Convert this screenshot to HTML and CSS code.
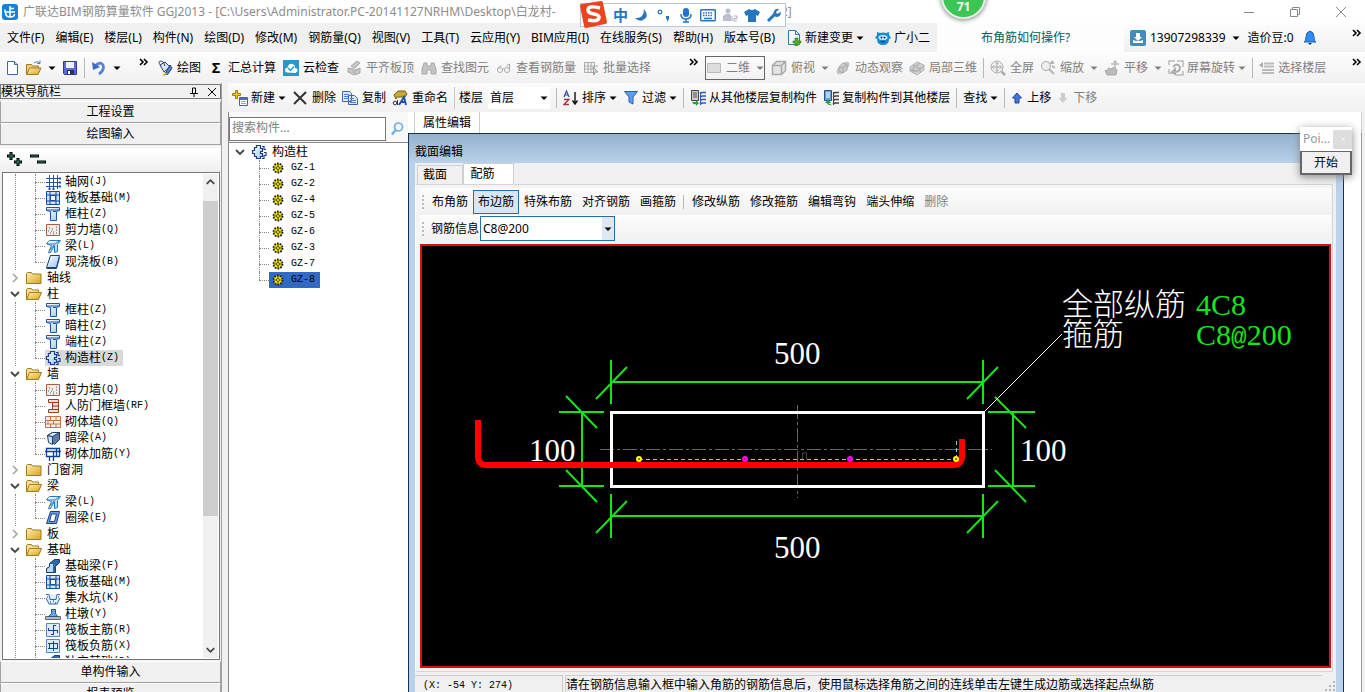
FILE: index.html
```html
<!DOCTYPE html>
<html lang="zh-CN">
<head>
<meta charset="utf-8">
<title>广联达BIM钢筋算量软件 GGJ2013</title>
<link rel="stylesheet" href="styles.css">
</head>
<body>
<svg class="sprite" aria-hidden="true">
  <defs>
    <linearGradient id="gold" x1="0" y1="0" x2="1" y2="1"><stop offset="0" stop-color="#fff3b0"/><stop offset="1" stop-color="#d9a21b"/></linearGradient>
    <linearGradient id="sky" x1="0" y1="0" x2="1" y2="1"><stop offset="0" stop-color="#ffffff"/><stop offset="1" stop-color="#9cc8f5"/></linearGradient>
  </defs>
  <symbol id="caret" viewBox="0 0 8 8"><path d="M0.5 2.5h7L4 6z" fill="currentColor"/></symbol>
  <symbol id="more" viewBox="0 0 10 8"><path d="M1 1l3 3-3 3M5 1l3 3-3 3" fill="none" stroke="#000" stroke-width="1.6"/></symbol>
  <symbol id="down" viewBox="0 0 16 16"><path d="M4 6l4 4 4-4" fill="none" stroke="#444" stroke-width="1.8"/></symbol>
  <symbol id="up" viewBox="0 0 16 16"><path d="M4 10l4-4 4 4" fill="none" stroke="#444" stroke-width="1.8"/></symbol>
  <symbol id="right" viewBox="0 0 16 16"><path d="M6 4l4 4-4 4" fill="none" stroke="#a0a0a0" stroke-width="1.5"/></symbol>
  <symbol id="folder" viewBox="0 0 16 16"><path d="M.5 3.5l1-1h4l1 1.500h8.500v9.500H.5z" fill="url(#gold)" stroke="#a5781a"/></symbol>
  <symbol id="folder-open" viewBox="0 0 16 16"><path d="M.5 13.500v-10l1-1h4l1 1.500h6v3" fill="#fbe08a" stroke="#a5781a"/><path d="M.5 13.500l3-7h12l-3 7z" fill="url(#gold)" stroke="#a5781a"/></symbol>
  <symbol id="axis" viewBox="0 0 16 16"><path d="M4.500 1v14M8.500 1v14M12.500 1v14M1 4.500h14M1 8.500h14M1 12.500h14" stroke="#1d55b5"/><path d="M14 3.500h2v2h-2zM14 7.500h2v2h-2zM14 11.500h2v2h-2zM3.500 14h2v2h-2zM7.500 14h2v2h-2z" fill="#1d55b5"/></symbol>
  <symbol id="raft" viewBox="0 0 16 16"><path d="M1.500 1.500h13v13h-13z" fill="#cfe5fb" stroke="#124a9d"/><path d="M5 1.500v13M11 1.500v13M1.500 5h13M1.500 11h13" stroke="#124a9d"/><path d="M5.500 5.500h5v5h-5z" fill="#fff" stroke="#124a9d"/></symbol>
  <symbol id="col" viewBox="0 0 16 16"><path d="M1.500 1.500h13v3l-3 1v9h-6v-9l-4-1z" fill="url(#sky)" stroke="#1b57a7"/><path d="M1.500 4h13M8 5.500h3" stroke="#1b57a7"/></symbol>
  <symbol id="wall" viewBox="0 0 16 16"><path d="M1.500 2.500h13v11h-13z" fill="#f3ece7" stroke="#a55b3d"/><path d="M3 9h1M5 11h1M8 10h1M4 6h1M7 7h1M11 8h1M11 11h1M8 12h1M6 9h1M11 5h1" stroke="#555"/></symbol>
  <symbol id="beam" viewBox="0 0 16 16"><path d="M1.500 5.500l3-3h11l-3 4v7l-3 1v-7l-4 7h-2l3-7z" fill="url(#sky)" stroke="#2878c8"/><path d="M2 6h8l4-3M9 7l-4 5" stroke="#2878c8" fill="none"/></symbol>
  <symbol id="slab" viewBox="0 0 16 16"><path d="M5.500 1.500h9l-3 12h-10z" fill="url(#sky)" stroke="#183f8c"/><path d="M1.500 14.500h10l3-11" fill="none" stroke="#183f8c"/></symbol>
  <symbol id="ring" viewBox="0 0 16 16"><path d="M5.500 1.500h9l-3 12h-10z" fill="#6fa0df" stroke="#183f8c"/><path d="M6.500 4h5l-2 7.500H4.500z" fill="#fff" stroke="#183f8c"/></symbol>
  <symbol id="tie" viewBox="0 0 16 16"><path d="M5.500 1.500h4v3h2v3h-2v2h2v3h-2v2h-4v-2h-2v-3h-2v-3h2v-3h2z" fill="url(#sky)" stroke="#183f8c" stroke-width="1.200"/><path d="M11 2.500h2v3h2M13 8.500h2v3h-2v3h-2" fill="none" stroke="#183f8c" stroke-width="1.200"/></symbol>
  <symbol id="door-wall" viewBox="0 0 16 16"><path d="M3.500 1.500h10v13h-10v-3h4v-7h-4z" fill="#f9dfc9" stroke="#923f1d"/><path d="M7.500 4.500h6M7.500 8h6M7.500 11.500h6" stroke="#923f1d"/></symbol>
  <symbol id="brick" viewBox="0 0 16 16"><path d="M.5 2.500h15v11H.5zM.5 6.500h15M.5 10h15M5.500 2.500v4M11 2.500v4M3 6.500v3.500M8.500 6.500v3.500M5.500 10v3.500M11 10v3.500" fill="#fff1e8" stroke="#c4704a"/></symbol>
  <symbol id="hidden-beam" viewBox="0 0 16 16"><path d="M2.500 5.500l5-3h7v7l-5 5z" fill="#5b7ba5" stroke="#223d66"/><path d="M2.500 5.500l5 1v8l-4-2z" fill="#c8e2fb" stroke="#223d66"/><path d="M2.500 5.500l5-3h7l-7 4z" fill="#deeefd" stroke="#223d66"/></symbol>
  <symbol id="rebar" viewBox="0 0 16 16"><path d="M1.500 2.500h10v8h-10zM0 5.500h16M4.500 10v5M8.500 5v10M11.500 2.500h3v8h-3" fill="none" stroke="#123f96" stroke-width="1.300"/></symbol>
  <symbol id="footing" viewBox="0 0 16 16"><path d="M1.500 14.500v-4l3-2v-3l5-4h5v3l-4 4v6z" fill="#2d68ac" stroke="#173d70"/><path d="M2 14v-3l3-2v-3h3v8z" fill="#b9dafa"/></symbol>
  <symbol id="pit" viewBox="0 0 16 16"><path d="M1 4.500h3l1 5h6l1-5h3M1 8l3 6h8l3-6" fill="#dceeff" stroke="#2b65ad"/><path d="M2 7h1M13 7h1M5 12h1M8 11h1M10 13h1" stroke="#123"/></symbol>
  <symbol id="pier" viewBox="0 0 16 16"><path d="M.5 10.500h15v3H.5z" fill="#bbb" stroke="#666"/><path d="M3.500 10.500l3-3v-4h4v4l2 3z" fill="#69a5e2" stroke="#23548e"/></symbol>
  <symbol id="main-bar" viewBox="0 0 16 16"><path d="M1.500 1.500h13v13h-13z" fill="#dcebfc" stroke="#5b83bd"/><path d="M3 8.500h10M8.500 3v10M3.500 6v3M12.500 8v3M8 3.500h3M6 12.500h3" stroke="#15448d"/></symbol>
  <symbol id="neg-bar" viewBox="0 0 16 16"><path d="M1.500 1.500h13v13h-13z" fill="#dcebfc" stroke="#5b83bd"/><path d="M3 5.500h10M3 10.500h10M8.500 3v10M4.500 5v6M12.500 5v6" stroke="#15448d"/></symbol>
  <symbol id="gear" viewBox="0 0 12 12"><circle cx="6" cy="6" r="4.500" fill="#f4e900" stroke="#222" stroke-width="1.800" stroke-dasharray="1.800 1"/><path d="M6 2v8M2 6h8" stroke="#554f00"/><circle cx="6" cy="6" r="1.500" fill="#fff700" stroke="#554f00"/></symbol>
  <symbol id="new" viewBox="0 0 16 16"><path d="M3.500 1.500h7l3 3v10h-10z" fill="#fff" stroke="#44699c"/><path d="M10.500 1.500v3h3" fill="#bfd4ee" stroke="#44699c"/></symbol>
  <symbol id="open" viewBox="0 0 16 16"><path d="M.5 14.500v-10h5l1 1.500h6v2.500" fill="#f4cf69" stroke="#a27622"/><path d="M.5 14.500l3-6.500h11.500l-3 6.500z" fill="url(#gold)" stroke="#a27622"/><path d="M8 3q3-3 6 0M14 .5v3h-3" fill="none" stroke="#567eb5"/></symbol>
  <symbol id="save" viewBox="0 0 16 16"><path d="M1.500 1.500h13v13h-12l-1-1z" fill="#5c6bd0" stroke="#30398f"/><path d="M4 2h8v6H4z" fill="#edf1fc"/><path d="M5 10h7v4H5z" fill="#26305b"/><path d="M6 11h2v3H6z" fill="#fff"/></symbol>
  <symbol id="undo" viewBox="0 0 16 16"><path d="M4 6q5-5 8-1 2 5-4 9" fill="none" stroke="#5583dc" stroke-width="2.800"/><path d="M1 2l1 8 7-3z" fill="#3969cb"/></symbol>
  <symbol id="paint" viewBox="0 0 16 16"><path d="M3 5l5-3 5 5-6 5z" fill="#dbe5f2" stroke="#32476d"/><path d="M4 6q-4-5 0-5 3 0 4 5" fill="none" stroke="#32476d"/><path d="M13 5l2 3-4 6-4 1 2-3z" fill="#4a84cf" stroke="#21406f"/><path d="M7 12l3 2-5 2z" fill="#f0ce38"/></symbol>
  <symbol id="cloud" viewBox="0 0 16 16"><path d="M0 0h16v16H0z" fill="#2798c9"/><path d="M4 12.500q-3-1-1.500-4 1-1 2-.5 1-5 5-4 3 1 2.500 4 3 0 2.500 3l-2 2z" fill="#fff"/><path d="M5 8l2.500 2.500L11 6.500" fill="none" stroke="#2798c9" stroke-width="1.500"/></symbol>
  <symbol id="align" viewBox="0 0 16 16"><path d="M5 6l6-5 3 2-5 5zM2 8l6 1v6l-6-3zM9 10l5-2v5l-5 2z" fill="#c6c6c6" stroke="#aaa"/></symbol>
  <symbol id="bino" viewBox="0 0 16 16"><path d="M3 3h3v3h4V3h3l2 6v5h-5v-4H6v4H1V9z" fill="#c3c3c3" stroke="#aaa"/></symbol>
  <symbol id="glasses" viewBox="0 0 16 16"><circle cx="4" cy="10" r="2.500" fill="none" stroke="#aaa"/><circle cx="11" cy="10" r="2.500" fill="none" stroke="#aaa"/><path d="M1.500 9l4-4M6.500 9h2M13.500 10V4l-3 2" fill="none" stroke="#aaa"/></symbol>
  <symbol id="batch" viewBox="0 0 16 16"><path d="M1.500 2.500h10v10h-10zM5 2v11M8 2v11M1 6h14M1 9h11" fill="none" stroke="#aaa"/><path d="M10 7l5 5-3 0-1 3z" fill="#ddd" stroke="#999"/></symbol>
  <symbol id="rect" viewBox="0 0 16 16"><path d="M1.500 3.500h13v9h-13z" fill="#ddd" stroke="#bbb"/></symbol>
  <symbol id="cube" viewBox="0 0 16 16"><path d="M1.500 5.500l4-4h9v9l-4 4h-9zM1.500 5.500h9v9M10.500 5.500l4-4" fill="#e4e4e4" stroke="#aaa" stroke-width="1.500"/></symbol>
  <symbol id="orbit" viewBox="0 0 16 16"><ellipse cx="8" cy="8" rx="8" ry="4" transform="rotate(-45 8 8)" fill="#c4c4c4"/><path d="M4 7l4-4 4 2v5l-4 3-4-2zM4 7l4 1 4-3M8 8v5" fill="#ccc" stroke="#aaa"/></symbol>
  <symbol id="part3d" viewBox="0 0 16 16"><path d="M1 7l7-5 7 3v5l-7 5-7-4z" fill="#d0d0d0" stroke="#b5b5b5"/><path d="M4 5l7 4v4M11 3L4 8v5M1 10l7 1 7-5" fill="none" stroke="#b0b0b0" stroke-width="1.300"/></symbol>
  <symbol id="fit" viewBox="0 0 16 16"><circle cx="7" cy="7" r="6" fill="#eee" stroke="#aaa"/><path d="M7 2.500v9M2.500 7h9M5.500 4L7 2.500 8.500 4M5.500 10L7 11.500 8.500 10M4 5.500L2.500 7 4 8.500M10 5.500L11.500 7 10 8.500" fill="none" stroke="#aaa"/><path d="M11.500 11.500L15 15" stroke="#aaa" stroke-width="2.500"/></symbol>
  <symbol id="zoomer" viewBox="0 0 16 16"><circle cx="6" cy="6" r="4.500" fill="#eee" stroke="#aaa"/><path d="M9 9l5 5M14 3h-3l2-2M12 6l3 2" stroke="#b5b5b5" stroke-width="2" fill="none"/></symbol>
  <symbol id="hand" viewBox="0 0 16 16"><path d="M3 15l-2-5 3 1V8l3 1 3-2 3 3-1 5z" fill="#bbb" stroke="#aaa"/><path d="M11 1v7M7 4h8M9.500 2.500L11 1l1.500 1.500" stroke="#bbb" fill="none" stroke-width="1.500"/></symbol>
  <symbol id="rotate" viewBox="0 0 16 16"><path d="M1 5V1h6M9 1h6v6M15 11v4H8M1 9v4h4" fill="none" stroke="#bbb" stroke-width="1.500"/><path d="M5 7q4-5 7 0 0 5-5 5M7 9v5L4 12z" fill="none" stroke="#aaa" stroke-width="1.800"/></symbol>
  <symbol id="floors" viewBox="0 0 16 16"><path d="M5 3.500h10M5 6.500h10M3 10h12M3 13h12" stroke="#bbb" stroke-width="2"/><path d="M0 5l4-3v6z" fill="#aaa"/></symbol>
  <symbol id="create" viewBox="0 0 16 16"><path d="M3.500.5h2v3h3v2h-3v3h-2v-3h-3v-2h3z" fill="#f3c527" stroke="#a27a12"/><path d="M7.500 7.500h8v8h-8z" fill="#fff" stroke="#3f66a6"/><path d="M8 8h7v2H8z" fill="#3f75c6"/><path d="M9 11.500h5M9 13.500h5" stroke="#8da8cf"/></symbol>
  <symbol id="delete" viewBox="0 0 16 16"><path d="M2 2l12 12M14 2L2 14" stroke="#333" stroke-width="2"/></symbol>
  <symbol id="copy" viewBox="0 0 16 16"><path d="M.5 1.500h7l2 2v8h-9zM6.500 5.500h6l3 3v6h-9z" fill="#dce9fb" stroke="#3965a9"/><path d="M2 4.500h5M2 6.500h4M2 8.500h4M8 8.500h4M8 10.500h6M8 12.500h6" stroke="#5383c8"/></symbol>
  <symbol id="rename" viewBox="0 0 16 16"><path d="M2 5l4-4h7l2 3-2 3H5l-1 2z" fill="#cda82e" stroke="#765d18"/><path d="M7 15l5-8 2 8M9 12h5" stroke="#2154b2" stroke-width="2" fill="none"/><circle cx="3" cy="13" r="1.800" fill="none" stroke="#333"/><path d="M5.500 10v5" stroke="#333"/></symbol>
  <symbol id="sort" viewBox="0 0 16 16"><path d="M1 7l2.500-6L6 7M2 5h3" fill="none" stroke="#3449a0" stroke-width="1.200"/><path d="M1 9.500h5l-5 5h5" fill="none" stroke="#a93043" stroke-width="1.300"/><path d="M12 2v11M9.500 10.500L12 14l2.500-3.500" fill="none" stroke="#111" stroke-width="1.400"/></symbol>
  <symbol id="filter" viewBox="0 0 16 16"><path d="M1.500 1.500h13L10 7v7l-4-2V7z" fill="#5e9cf0" stroke="#2b5eb3"/></symbol>
  <symbol id="copy-floor" viewBox="0 0 16 16"><path d="M1.500.5h7v10h-7z" fill="#ccc" stroke="#444"/><path d="M3 3h4M3 5h4M3 7h4" stroke="#555"/><path d="M10 3.500l2-1h4M10 7l2-1h4M10 10.500l2-1h4M10 14l2-1h4" fill="none" stroke="#285db2" stroke-width="1.700"/><path d="M10.500 2v13" stroke="#285db2"/><path d="M2 12q1 3 4 2v2l3-3-3-3v2z" fill="#24a148"/></symbol>
  <symbol id="copy-to" viewBox="0 0 16 16"><path d="M1.500.5h7v10h-7z" fill="#69a4d8" stroke="#24528b"/><path d="M3 3h4M3 5h4M3 7h4" stroke="#fff"/><path d="M10 3.500l2-1h4M10 7l2-1h4M10 10.500l2-1h4M10 14l2-1h4" fill="none" stroke="#444" stroke-width="1.700"/><path d="M10.500 2v13" stroke="#444"/><path d="M9 15q-4 1-5-2H2l3-4 3 4H6q0 1 3 2z" fill="#24a148"/></symbol>
  <symbol id="arrow-up" viewBox="0 0 12 12"><path d="M6 1l4.500 5H8v5H4V6H1.500z" fill="#3c79e5" stroke="#1d4794"/></symbol>
  <symbol id="arrow-down" viewBox="0 0 12 12"><path d="M6 11L1.500 6H4V1h4v5h2.500z" fill="#ccc"/></symbol>
  <symbol id="change" viewBox="0 0 16 16"><path d="M2.500.5h7l4 4v10h-11z" fill="#eef6ff" stroke="#3576a8"/><path d="M9.500.5v4h4" fill="none" stroke="#3576a8"/><path d="M9 8h3v3h3v2h-3v3H9v-3H7v-2h2z" fill="#50ae25" stroke="#287c10" stroke-width=".6"/></symbol>
  <symbol id="mascot" viewBox="0 0 16 16"><path d="M2 2l3 1q3-1 6 0l3-1v3l2 3-2 1q0 6-6 6t-6-6L0 8l2-3z" fill="#168bd0"/><ellipse cx="8" cy="7.500" rx="4.500" ry="2.500" fill="#cceeff"/><circle cx="6.500" cy="7.500" r="1" fill="#136"/><circle cx="9.500" cy="7.500" r="1" fill="#136"/><path d="M6 11.500q2 1 4 0" stroke="#126" fill="none"/></symbol>
  <symbol id="user" viewBox="0 0 16 16"><rect width="16" height="16" rx="2" fill="#3e8dbd"/><path d="M6 3h4v4h2l-4 4-4-4h2zM3 10v3h10v-3l-3 1H6z" fill="#fff"/></symbol>
  <symbol id="bell" viewBox="0 0 14 16"><path d="M7 1q4 1 4 6 0 4 2 5H1q2-1 2-5 0-5 4-6z" fill="#2d8cf5" stroke="#1e5eb0"/><path d="M5 13h4l-2 2z" fill="#16365f"/></symbol>
  <symbol id="search" viewBox="0 0 16 16"><circle cx="9.500" cy="6" r="4" fill="#edf7ff" stroke="#71b2df" stroke-width="1.700"/><path d="M6.500 9L3 13.500" stroke="#71b2df" stroke-width="2.500"/></symbol>
</svg>

<header class="titlebar">
  <svg class="logo" viewBox="0 0 16 16"><rect width="16" height="16" rx="3" fill="#1581dc"/><path d="M8 2v11M3 5.500v2.500h10M3.500 8q0 5 4.500 5t4.500-3M8 4.500h4" fill="none" stroke="#fff" stroke-width="1.500"/></svg>
  <h1>广联达BIM钢筋算量软件 GGJ2013 - [C:\Users\Administrator.PC-20141127NRHM\Desktop\白龙村-</h1>
  <span class="title-tail">2]</span>
  <div class="window-buttons">
    <button aria-label="最小化"><svg viewBox="0 0 12 12"><path d="M1 6.500h10" stroke="#888"/></svg></button>
    <button aria-label="还原"><svg viewBox="0 0 12 12"><path d="M1.500 3.500h7v7h-7zM3.500 3.500v-2h7v7h-2" fill="none" stroke="#888"/></svg></button>
    <button aria-label="关闭"><svg viewBox="0 0 12 12"><path d="M1 1l10 10M11 1L1 11" stroke="#888"/></svg></button>
  </div>
  <div class="ime">
    <svg class="ime-logo" viewBox="0 0 28 28"><path d="M1 5Q1 3 3 3L22 0q2 0 2 2l4 19q0 2-2 2L7 27q-2 0-2-2z" fill="#e9441d"/><path d="M21 7q-12-3-12 2 0 3 6 4t5 4q-1 4-11 2" fill="none" stroke="#fff" stroke-width="3.500"/></svg>
    <span>中</span>
    <svg viewBox="0 0 16 16"><path d="M10 2q6 8-1 11-4 2-8-2 9 1 9-9z" fill="#2575bf"/></svg>
    <svg viewBox="0 0 16 16"><circle cx="4" cy="5" r="1.800" fill="none" stroke="#2575bf" stroke-width="1.300"/><path d="M10 9h3v3l-2 3v-3h-1z" fill="#2575bf"/></svg>
    <svg viewBox="0 0 16 16"><rect x="5" y="1" width="6" height="9" rx="3" fill="#2575bf"/><path d="M3 7q0 5 5 5t5-5M8 12v3M5 15h6" fill="none" stroke="#2575bf" stroke-width="1.500"/></svg>
    <svg viewBox="0 0 16 16"><rect x=".7" y="2.700" width="14.600" height="11" rx="1" fill="none" stroke="#2575bf" stroke-width="1.500"/><path d="M3 6h10M3 8.500h10" stroke="#2575bf" stroke-width="1.500" stroke-dasharray="1.500 1"/><path d="M4 11.500h8" stroke="#2575bf" stroke-width="1.500"/></svg>
    <svg viewBox="0 0 16 16"><circle cx="6" cy="4" r="2.500" fill="#b9bfd1"/><path d="M1 14V9q5-4 8-1v6z" fill="#b9bfd1"/><path d="M10 9v5M12 9h3v2.500h-3V14h3" fill="none" stroke="#a5adc4"/></svg>
    <svg viewBox="0 0 16 16"><path d="M5 2q3 2 6 0l5 3-2 4-2-1v7H4V8L2 9 0 5z" fill="#2575bf"/></svg>
    <svg viewBox="0 0 16 16"><path d="M2 14l7-7" stroke="#2575bf" stroke-width="3"/><path d="M13 2l-3 3 1 2 4-2q0 5-5 5-4-2-2-6 2-3 5-2z" fill="#2575bf"/></svg>
  </div>
  <div class="speed-ball">71</div>
</header>

<div class="menubar">
  <nav class="menus">
    <button>文件(F)</button><button>编辑(E)</button><button>楼层(L)</button><button>构件(N)</button><button>绘图(D)</button><button>修改(M)</button><button>钢筋量(Q)</button><button>视图(V)</button><button>工具(T)</button><button>云应用(Y)</button><button>BIM应用(I)</button><button>在线服务(S)</button><button>帮助(H)</button><button>版本号(B)</button><button class="tool tight"><svg class="ic"><use href="#change"/></svg>新建变更<svg class="caret"><use href="#caret"/></svg></button><button class="tool tight"><svg class="ic"><use href="#mascot"/></svg>广小二</button>
  </nav>
  <a class="help-link" href="#">布角筋如何操作?</a>
  <div class="account">
    <button class="tool"><svg class="ic"><use href="#user"/></svg>13907298339<svg class="caret"><use href="#caret"/></svg></button>
    <button class="tool">造价豆:0<svg class="ic bell"><use href="#bell"/></svg></button>
    <svg class="more"><use href="#more"/></svg>
  </div>
</div>

<div class="toolbar main-tools">
  <div class="file-tools">
    <button class="tool" aria-label="新建"><svg class="ic"><use href="#new"/></svg></button>
    <button class="tool" aria-label="打开"><svg class="ic"><use href="#open"/></svg><svg class="caret"><use href="#caret"/></svg></button>
    <button class="tool" aria-label="保存"><svg class="ic"><use href="#save"/></svg></button>
    <i class="sep"></i>
    <button class="tool" aria-label="撤销"><svg class="ic"><use href="#undo"/></svg><svg class="caret"><use href="#caret"/></svg></button>
    <svg class="more"><use href="#more"/></svg>
  </div>
  <div class="draw-tools">
    <button class="tool"><svg class="ic"><use href="#paint"/></svg>绘图</button>
    <button class="tool"><b class="sigma">Σ</b>汇总计算</button>
    <button class="tool"><svg class="ic"><use href="#cloud"/></svg>云检查</button>
    <button class="tool" disabled><svg class="ic"><use href="#align"/></svg>平齐板顶</button>
    <button class="tool" disabled><svg class="ic"><use href="#bino"/></svg>查找图元</button>
    <button class="tool" disabled><svg class="ic"><use href="#glasses"/></svg>查看钢筋量</button>
    <button class="tool" disabled><svg class="ic"><use href="#batch"/></svg>批量选择</button>
    <svg class="more"><use href="#more"/></svg>
  </div>
  <div class="view-tools">
    <button class="tool boxed" disabled><svg class="ic"><use href="#rect"/></svg>二维<svg class="caret"><use href="#caret"/></svg></button>
    <button class="tool" disabled><svg class="ic"><use href="#cube"/></svg>俯视<svg class="caret"><use href="#caret"/></svg></button>
    <button class="tool" disabled><svg class="ic"><use href="#orbit"/></svg>动态观察</button>
    <button class="tool" disabled><svg class="ic"><use href="#part3d"/></svg>局部三维</button>
    <i class="sep"></i>
    <button class="tool" disabled><svg class="ic"><use href="#fit"/></svg>全屏</button>
    <button class="tool" disabled><svg class="ic"><use href="#zoomer"/></svg>缩放<svg class="caret"><use href="#caret"/></svg></button>
    <button class="tool" disabled><svg class="ic"><use href="#hand"/></svg>平移<svg class="caret"><use href="#caret"/></svg></button>
    <button class="tool tight" disabled><svg class="ic"><use href="#rotate"/></svg>屏幕旋转<svg class="caret"><use href="#caret"/></svg></button>
    <i class="sep"></i>
    <button class="tool tight" disabled><svg class="ic"><use href="#floors"/></svg>选择楼层</button>
    <svg class="more"><use href="#more"/></svg>
  </div>
</div>

<main class="workspace">
  <aside class="nav-panel">
    <header class="nav-head"><h2>模块导航栏</h2>
      <button aria-label="固定"><svg viewBox="0 0 10 10"><path d="M3.500 6V1h3v5M6.500 1v5M1 6.500h8M5 6.500V10" fill="none" stroke="#000"/></svg></button>
      <button aria-label="关闭导航栏"><svg viewBox="0 0 10 10"><path d="M1 1l8 8M9 1L1 9" stroke="#000"/></svg></button>
    </header>
    <button class="section">工程设置</button>
    <button class="section">绘图输入</button>
    <div class="expanders">
      <button aria-label="全部展开"><svg viewBox="0 0 18 16"><path d="M5 1v8M1 5h8M12 7v8M8 11h8" stroke="#000" stroke-width="3"/><path d="M5 2v6M2 5h6M12 8v6M9 11h6" stroke="#2b8a72"/></svg></button>
      <button aria-label="全部折叠"><svg viewBox="0 0 18 16"><path d="M1 5h9M8 11h9" stroke="#000" stroke-width="3"/><path d="M2 5h7M9 11h7" stroke="#2b8a72"/></svg></button>
    </div>
    <div class="tree-box">
      <ul class="tree">
        <li><ul class="leaves">
          <li><svg class="ic"><use href="#axis"/></svg>轴网<span>(J)</span></li>
          <li><svg class="ic"><use href="#raft"/></svg>筏板基础<span>(M)</span></li>
          <li><svg class="ic"><use href="#col"/></svg>框柱<span>(Z)</span></li>
          <li><svg class="ic"><use href="#wall"/></svg>剪力墙<span>(Q)</span></li>
          <li><svg class="ic"><use href="#beam"/></svg>梁<span>(L)</span></li>
          <li><svg class="ic"><use href="#slab"/></svg>现浇板<span>(B)</span></li>
        </ul></li>
        <li><div class="branch"><svg class="ic"><use href="#right"/></svg><svg class="ic"><use href="#folder"/></svg>轴线</div></li>
        <li><div class="branch"><svg class="ic"><use href="#down"/></svg><svg class="ic"><use href="#folder-open"/></svg>柱</div>
        <ul class="leaves">
          <li><svg class="ic"><use href="#col"/></svg>框柱<span>(Z)</span></li>
          <li><svg class="ic"><use href="#col"/></svg>暗柱<span>(Z)</span></li>
          <li><svg class="ic"><use href="#col"/></svg>端柱<span>(Z)</span></li>
          <li><div class="current"><svg class="ic"><use href="#tie"/></svg>构造柱<span>(Z)</span></div></li>
        </ul></li>
        <li><div class="branch"><svg class="ic"><use href="#down"/></svg><svg class="ic"><use href="#folder-open"/></svg>墙</div>
        <ul class="leaves">
          <li><svg class="ic"><use href="#wall"/></svg>剪力墙<span>(Q)</span></li>
          <li><svg class="ic"><use href="#door-wall"/></svg>人防门框墙<span>(RF)</span></li>
          <li><svg class="ic"><use href="#brick"/></svg>砌体墙<span>(Q)</span></li>
          <li><svg class="ic"><use href="#hidden-beam"/></svg>暗梁<span>(A)</span></li>
          <li><svg class="ic"><use href="#rebar"/></svg>砌体加筋<span>(Y)</span></li>
        </ul></li>
        <li><div class="branch"><svg class="ic"><use href="#right"/></svg><svg class="ic"><use href="#folder"/></svg>门窗洞</div></li>
        <li><div class="branch"><svg class="ic"><use href="#down"/></svg><svg class="ic"><use href="#folder-open"/></svg>梁</div>
        <ul class="leaves">
          <li><svg class="ic"><use href="#beam"/></svg>梁<span>(L)</span></li>
          <li><svg class="ic"><use href="#ring"/></svg>圈梁<span>(E)</span></li>
        </ul></li>
        <li><div class="branch"><svg class="ic"><use href="#right"/></svg><svg class="ic"><use href="#folder"/></svg>板</div></li>
        <li><div class="branch"><svg class="ic"><use href="#down"/></svg><svg class="ic"><use href="#folder-open"/></svg>基础</div>
        <ul class="leaves">
          <li><svg class="ic"><use href="#footing"/></svg>基础梁<span>(F)</span></li>
          <li><svg class="ic"><use href="#raft"/></svg>筏板基础<span>(M)</span></li>
          <li><svg class="ic"><use href="#pit"/></svg>集水坑<span>(K)</span></li>
          <li><svg class="ic"><use href="#pier"/></svg>柱墩<span>(Y)</span></li>
          <li><svg class="ic"><use href="#main-bar"/></svg>筏板主筋<span>(R)</span></li>
          <li><svg class="ic"><use href="#neg-bar"/></svg>筏板负筋<span>(X)</span></li>
          <li><svg class="ic"><use href="#footing"/></svg>独立基础<span>(D)</span></li>
        </ul></li>
      </ul>
      <div class="scroll"><svg class="ic"><use href="#up"/></svg><i class="thumb"></i><svg class="ic"><use href="#down"/></svg></div>
    </div>
    <div class="nav-foot">
      <button class="section">单构件输入</button>
      <button class="section">报表预览</button>
    </div>
  </aside>

  <section class="editor">
    <div class="toolbar part-tools">
      <button class="tool tight"><svg class="ic"><use href="#create"/></svg>新建<svg class="caret"><use href="#caret"/></svg></button>
      <button class="tool"><svg class="ic"><use href="#delete"/></svg>删除</button>
      <button class="tool"><svg class="ic"><use href="#copy"/></svg>复制</button>
      <button class="tool"><svg class="ic"><use href="#rename"/></svg>重命名</button>
      <label class="floor">楼层 <span class="combo"><select><option>首层</option></select><svg class="caret"><use href="#caret"/></svg></span></label>
      <i class="sep"></i>
      <button class="tool tight"><svg class="ic"><use href="#sort"/></svg>排序<svg class="caret"><use href="#caret"/></svg></button>
      <button class="tool tight"><svg class="ic"><use href="#filter"/></svg>过滤<svg class="caret"><use href="#caret"/></svg></button>
      <i class="sep"></i>
      <button class="tool tight"><svg class="ic"><use href="#copy-floor"/></svg>从其他楼层复制构件</button>
      <button class="tool tight"><svg class="ic"><use href="#copy-to"/></svg>复制构件到其他楼层</button>
      <i class="sep"></i>
      <button class="tool tight">查找<svg class="caret"><use href="#caret"/></svg></button>
      <i class="sep"></i>
      <button class="tool"><svg class="ic small"><use href="#arrow-up"/></svg>上移</button>
      <button class="tool" disabled><svg class="ic small"><use href="#arrow-down"/></svg>下移</button>
    </div>
    <div class="panes">
      <section class="parts">
        <div class="search"><input type="text" placeholder="搜索构件..." aria-label="搜索构件"><button aria-label="搜索"><svg class="ic"><use href="#search"/></svg></button></div>
        <div class="part-list">
          <div class="branch"><svg class="ic"><use href="#down"/></svg><svg class="ic"><use href="#tie"/></svg>构造柱</div>
          <ul class="leaves">
            <li><div><svg class="gear"><use href="#gear"/></svg><span>GZ-1</span></div></li>
            <li><div><svg class="gear"><use href="#gear"/></svg><span>GZ-2</span></div></li>
            <li><div><svg class="gear"><use href="#gear"/></svg><span>GZ-4</span></div></li>
            <li><div><svg class="gear"><use href="#gear"/></svg><span>GZ-5</span></div></li>
            <li><div><svg class="gear"><use href="#gear"/></svg><span>GZ-6</span></div></li>
            <li><div><svg class="gear"><use href="#gear"/></svg><span>GZ-3</span></div></li>
            <li><div><svg class="gear"><use href="#gear"/></svg><span>GZ-7</span></div></li>
            <li><div class="selected"><svg class="gear"><use href="#gear"/></svg><span>GZ-8</span></div></li>
          </ul>
        </div>
      </section>
      <section class="props">
        <div class="props-tabs"><button>属性编辑</button></div>
        <div class="props-body">
          <article class="dialog">
            <h2>截面编辑</h2>
            <div class="dialog-body">
              <div class="tabs"><button>截面</button><button class="active">配筋</button></div>
              <div class="page">
                <div class="rebar-tools"><i class="grip"></i><button>布角筋</button><button class="pressed">布边筋</button><button>特殊布筋</button><button>对齐钢筋</button><button>画箍筋</button><i class="sep"></i><button>修改纵筋</button><button>修改箍筋</button><button>编辑弯钩</button><button>端头伸缩</button><button disabled>删除</button></div>
                <div class="rebar-info"><i class="grip"></i><label for="rebar">钢筋信息</label><span class="combo framed"><select id="rebar"><option>C8@200</option></select><svg class="caret"><use href="#caret"/></svg></span></div>
                <div class="canvas">
                  <svg viewBox="422 246 907 420" role="img" aria-label="截面配筋图">
                    <g fill="none" stroke="#666" stroke-dasharray="14 3 3 3"><path d="M600 449.500H992"/><path d="M797.500 405V498"/></g>
                    <g fill="none" stroke="#15e51b" stroke-width="2">
                      <path d="M611 382H983M611 360V404M983 360V404M596 399L627 367M967 399L998 367"/>
                      <path d="M611 516H983M611 494V538M983 494V538M596 533L627 501M967 533L998 501"/>
                      <path d="M582 412V486M559 412H604M559 486H604M566 396L597 428M566 470L597 502"/>
                      <path d="M1013 412V486M988 412H1035M988 486H1035M995 397L1026 428M995 470L1026 502"/>
                    </g>
                    <rect x="611.500" y="412.500" width="372" height="74" fill="none" stroke="#fff" stroke-width="3"/>
                    <path d="M984 412L1062 334" stroke="#fff"/>
                    <path d="M478 420V456Q478 465 487 465H953Q962 465 962 456V439" fill="none" stroke="#f00" stroke-width="6"/>
                    <path d="M639 459.500H956M956.500 459V440" fill="none" stroke="#62dcdc" stroke-dasharray="4 3"/>
                    <g fill="#553" stroke="#ff0" stroke-width="2"><circle cx="639" cy="459" r="2"/><circle cx="956" cy="459" r="2"/></g>
                    <g fill="#b0b" stroke="#f0f" stroke-width="2"><circle cx="745" cy="459" r="2"/><circle cx="850" cy="459" r="2"/></g>
                    <path d="M802.500 459v-6h4v6" fill="none" stroke="#444"/>
                    <g class="dims"><text x="774" y="364">500</text><text x="774" y="558">500</text><text x="529" y="461">100</text><text x="1020" y="461">100</text></g>
                    <g class="notes"><text x="1062" y="315">全部纵筋</text><text x="1062" y="345">箍筋</text></g>
                    <g class="specs"><text x="1196" y="315">4C8</text><text x="1196" y="345">C8<tspan class="at">@</tspan>200</text></g>
                  </svg>
                </div>
              </div>
              <footer class="status"><output>(X: -54 Y: 274)</output><p>请在钢筋信息输入框中输入角筋的钢筋信息后，使用鼠标选择角筋之间的连线单击左键生成边筋或选择起点纵筋</p><svg class="resize" viewBox="0 0 12 12"><path d="M9 1h2v2H9zM9 5h2v2H9zM9 9h2v2H9zM5 5h2v2H5zM5 9h2v2H5zM1 9h2v2H1z" fill="#b5b5b5"/></svg></footer>
            </div>
          </article>
        </div>
      </section>
    </div>
  </section>
</main>

<div class="mini-window">
  <div class="mini-title"><span>Poi...</span><button aria-label="关闭小窗"><svg viewBox="0 0 10 10"><path d="M3 3l4 4M7 3L3 7" stroke="#eee"/></svg></button></div>
  <button class="start">开始</button>
</div>
</body>
</html>
```
FILE: styles.css
```css
* { box-sizing: border-box; }
body {
  margin: 0;
  height: 100vh;
  display: flex;
  flex-direction: column;
  overflow: hidden;
  position: relative;
  background: #f0f0f0;
  color: #000;
  font: 12px/16px "Noto Sans", "Noto Sans CJK SC", sans-serif;
}
button, input, select { font: inherit; color: inherit; }
button { margin: 0; padding: 0; border: 0; background: none; white-space: nowrap; }
button:disabled { color: #808080; }
h1, h2, p { margin: 0; font-size: 12px; font-weight: 400; }
ul { margin: 0; padding: 0; list-style: none; }
svg { flex: none; display: block; }
.sprite { position: absolute; width: 0; height: 0; }
.ic { width: 16px; height: 16px; }
.ic.small { width: 12px; height: 12px; }
.caret { width: 8px; height: 8px; }
.more { width: 10px; height: 8px; margin-left: auto; }
.sep { width: 1px; height: 20px; background: #b8b8b8; flex: none; }

/* title bar */
.titlebar { position: relative; flex: none; height: 23px; display: flex; align-items: center; background: #fff; color: #8c8c8c; padding-left: 2px; }
.logo { width: 16px; height: 16px; margin-right: 5px; }
.titlebar h1 { width: 560px; white-space: nowrap; overflow: hidden; }
.title-tail { margin-left: 196px; padding-left: 2px; }
.window-buttons { margin-left: auto; display: flex; gap: 34px; padding-right: 18px; }
.window-buttons svg { width: 12px; height: 12px; }
.ime { position: absolute; z-index: 3; left: 580px; top: 3px; height: 24px; width: 206px; display: flex; align-items: center; gap: 6px; background: #fff; border: 1px solid #b9c6d8; color: #2575bf; }
.ime svg { width: 16px; height: 16px; }
.ime .ime-logo { width: 28px; height: 28px; margin-left: -2px; }
.ime span { font-size: 15px; font-weight: 700; }
.speed-ball { position: absolute; z-index: 3; left: 941px; top: -26px; width: 45px; height: 45px; border-radius: 50%; border: 2px solid #e6f5e6; background: #3cc455; box-shadow: 0 1px 5px #777; color: #fff; text-align: center; font-weight: 700; padding-top: 23px; }

/* menu bar */
.menubar { flex: none; height: 29px; display: flex; align-items: stretch; }
.menus { width: 937px; flex: none; display: flex; align-items: center; gap: 11px; padding-left: 7px; }
.help-link { width: 187px; display: flex; align-items: center; padding-left: 44px; background: #fdfdfd; color: #006060; text-decoration: none; }
.account { flex: 1; display: flex; align-items: center; gap: 8px; padding: 0 3px 0 6px; background: linear-gradient(#fdfdfd, #f0f0f0); }
.bell { margin-left: 4px; }

/* toolbars */
.toolbar { flex: none; display: flex; align-items: center; }
.tool { display: flex; align-items: center; gap: 4px; }
.tool .caret { margin-left: 2px; }
.tool.tight { gap: 3px; }
.tool.tight .caret { margin-left: 0; }
.main-tools { height: 31px; align-items: stretch; }
.main-tools > div { display: flex; align-items: center; gap: 7px; background: linear-gradient(#fdfdfd, #f0f0f0); }
.main-tools .file-tools { width: 153px; padding: 0 4px; gap: 6px; }
.main-tools .draw-tools { width: 549px; padding: 0 3px 0 4px; }
.main-tools .view-tools { flex: 1; padding: 0 3px; gap: 6px; }
.file-tools .more, .draw-tools .more, .view-tools .more, .account .more { align-self: flex-start; margin-top: 6px; }
.sigma { width: 16px; font-size: 14px; text-align: center; }
.tool.boxed { border: 1px solid #666; height: 24px; }
.part-tools { height: 29px; gap: 6px; padding-left: 4px; background: linear-gradient(#fbfbfb, #f0f0f0); }
.floor { display: flex; align-items: center; gap: 5px; border-left: 1px solid #c8c8c8; padding-left: 4px; }
.combo { position: relative; display: flex; align-items: center; width: 62px; background: #fff; }
.combo select { appearance: none; width: 100%; height: 22px; border: 0; background: transparent; padding: 0 2px; outline: 0; }
.combo .caret { position: absolute; right: 2px; pointer-events: none; }

/* navigation panel */
.workspace { flex: 1; min-height: 0; display: flex; gap: 6px; }
.nav-panel { width: 222px; flex: none; display: flex; flex-direction: column; border-right: 1px solid #a0a0a0; padding-top: 1px; }
.nav-head { height: 15px; display: flex; align-items: center; gap: 8px; border: 1px solid #777; margin-bottom: 2px; padding-right: 3px; }
.nav-head h2 { flex: 1; }
.nav-head svg { width: 10px; height: 10px; }
.section { flex: none; height: 22px; width: 100%; border: 1px solid #a0a0a0; border-top-color: #fff; background: #f0f0f0; text-align: center; }
.expanders { height: 27px; flex: none; display: flex; align-items: center; gap: 5px; padding-left: 6px; background: linear-gradient(#f0f0f0, #fff 20%, #eee); }
.expanders svg { width: 18px; height: 16px; }
.tree-box { flex: 1; min-height: 0; display: flex; margin: 0 1px 1px 2px; border: 1px solid #777; background: #fff; padding: 1px 1px 1px 0; }
.tree { flex: 1; overflow: hidden; }
.branch { display: flex; align-items: center; height: 16px; gap: 5px; padding-left: 4px; white-space: nowrap; }
.branch .ic + .ic { margin-left: -2px; }
.leaves { margin-left: 12px; padding-left: 19px; border-left: 1px dotted #888; }
.leaves li { position: relative; display: flex; align-items: center; height: 16px; white-space: nowrap; }
.leaves li::before { content: ""; width: 10px; border-top: 1px dotted #888; }
.leaves li::after { content: ""; position: absolute; left: 0; top: 0; height: 16px; border-left: 1px dotted #888; }
.leaves li:last-child::after { height: 8px; }
.leaves .ic { margin-right: 4px; }
.leaves span, .status output { font-family: "Liberation Mono", monospace; font-size: 10px; }
.current { display: flex; align-items: center; background: #d9d9d9; padding-right: 4px; }
.scroll { width: 15px; display: flex; flex-direction: column; background: #f0f0f0; }
.scroll .ic { width: 15px; }
.scroll .thumb { flex: none; height: 65%; margin: 11px 0 auto; background: #cdcdcd; }
.nav-foot { flex: none; height: 31px; overflow: hidden; }

/* component list */
.editor { flex: 1; min-width: 0; display: flex; flex-direction: column; }
.panes { flex: 1; min-height: 0; display: flex; }
.parts { width: 180px; flex: none; display: flex; flex-direction: column; background: #fff; border-left: 1px solid #888; }
.search { height: 30px; display: flex; align-items: center; padding-top: 4px; background: #f8f8f8; }
.search input { width: 157px; height: 24px; border: 1px solid #777; background: #fff; padding: 0 2px 4px; outline: 0; }
.search input::placeholder { color: #808080; opacity: 1; }
.search button { flex: 1; display: grid; place-items: center; }
.part-list { flex: 1; border-top: 1px solid #888; padding-top: 1px; }
.part-list .branch { padding-left: 3px; }
.part-list .leaves { margin-left: 10px; border-left-color: transparent; }
.part-list .leaves li div { display: flex; align-items: center; height: 16px; padding: 0 5px 0 3px; }
.part-list .selected { background: #316ac5; }
.gear { width: 12px; height: 12px; margin-right: 7px; }

/* property pane and section dialog */
.props { flex: 1; min-width: 0; display: flex; flex-direction: column; padding-right: 3px; }
.props-tabs { flex: none; height: 21px; background: #fff; padding-left: 6px; border-right: 1px solid #ccc; }
.props-tabs button { height: 21px; padding: 0 8px; border: 1px solid #ccc; border-top: 0; border-bottom: 0; background: #fff; }
.props-body { flex: 1; min-height: 0; display: flex; background: #fff; border-right: 1px solid #999; padding-right: 17px; }
.dialog { flex: 1; min-width: 0; display: flex; flex-direction: column; border: 1px solid #153250; border-bottom: 0; background: #b9d1ea; padding: 0 7px 0 6px; }
.dialog h2 { flex: none; height: 29px; line-height: 36px; margin: 0 -7px 0 -6px; padding-left: 6px; background: linear-gradient(#94b1cd, #b9d1ea); }
.dialog-body { flex: 1; min-height: 0; display: flex; flex-direction: column; background: #f0f0f0; }
.tabs { flex: none; height: 21px; display: flex; align-items: flex-end; padding-left: 2px; }
.tabs button { height: 19px; width: 46px; padding-right: 10px; border: 1px solid #d0d0d0; border-bottom: 0; }
.tabs .active { height: 21px; width: 51px; padding: 0 12px 0 0; background: #fff; }
.page { flex: 1; min-height: 0; display: flex; flex-direction: column; margin-right: 3px; padding: 3px 1px 3px 4px; border: 1px solid #d5d5d5; border-left-color: #fff; background: #f4f4f4; }
.rebar-tools, .rebar-info { flex: none; display: flex; align-items: center; height: 27px; padding-left: 2px; background: linear-gradient(#fdfdfd, #f0f0f0); }
.rebar-info { margin-bottom: 2px; }
.rebar-tools button { height: 24px; padding: 0 4px; border: 1px solid transparent; }
.rebar-tools .pressed { border-color: #256eae; background: #d6e6f5; }
.rebar-tools .sep { height: 14px; margin: 0 3px 0 2px; }
.grip { width: 2px; height: 14px; margin-right: 3px; background: repeating-linear-gradient(#bbb 0 2px, transparent 2px 4px); }
.rebar-info label { padding-left: 4px; }
.combo.framed { width: 135px; height: 25px; margin-left: 1px; border: 1px solid #256eae; background: linear-gradient(90deg, #fff 121px, #dce9f5 121px); }
.canvas { flex: 1; min-height: 0; border: 2px solid #e00c10; background: #000; }
.canvas svg { width: 100%; height: 100%; }
.dims { fill: #fff; font: 31px "Liberation Serif", serif; }
.notes { fill: #fff; font: 300 31px "Noto Sans CJK SC", sans-serif; }
.specs { fill: #15e51b; font: 30px "Liberation Serif", serif; }
.specs .at { font: 26px "Liberation Mono", monospace; }
.status { flex: none; display: flex; align-items: stretch; gap: 2px; height: 20px; padding-top: 3px; }
.status output { width: 148px; padding: 2px 8px 0; border: 1px solid #ccc; border-bottom: 0; border-left: 0; white-space: nowrap; }
.status p { flex: 1; padding: 1px 0 0; border: 1px solid #ccc; border-width: 1px 0 0 1px; white-space: nowrap; overflow: hidden; }
.resize { width: 12px; height: 12px; align-self: flex-end; }

/* floating mini window */
.mini-window { position: absolute; right: 13px; top: 127px; width: 52px; background: #fff; box-shadow: 0 2px 8px #888; }
.mini-title { display: flex; align-items: center; justify-content: space-between; height: 24px; padding-left: 3px; color: #999; }
.mini-title button { width: 19px; height: 19px; display: grid; place-items: center; background: #ddd; }
.mini-title svg { width: 10px; height: 10px; }
.start { width: 100%; height: 24px; background: #f0f0f0; border: 2px solid #666; border-top-width: 1px; }
```
